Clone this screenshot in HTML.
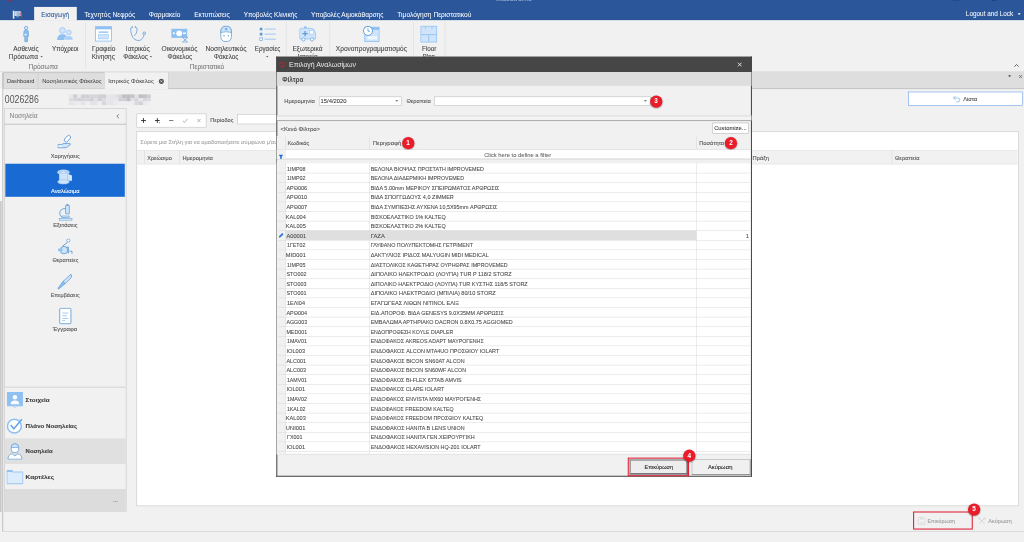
<!DOCTYPE html>
<html lang="el">
<head>
<meta charset="utf-8">
<title>Επιλογή Αναλωσίμων</title>
<style>
html,body{margin:0;padding:0;width:1024px;height:542px;overflow:hidden;background:#f1f1f1;}
body{font-family:"Liberation Sans",sans-serif;}
#app{position:absolute;left:0;top:0;width:1920px;height:1017px;transform:scale(0.5333333);transform-origin:0 0;overflow:hidden;background:#f1f1f1;}
#app div,#app svg.i{position:absolute;box-sizing:border-box;}
.t{position:absolute;white-space:nowrap;display:block;-webkit-text-stroke:0.16px currentColor;}
.s{display:inline-block;}
.badge{width:23px;height:23px;border-radius:50%;background:#ea1c2a;color:#fff;font-weight:bold;font-size:12px;line-height:23px;text-align:center;box-shadow:0 1px 3px rgba(0,0,0,.45);}

.blue{background:#2b579a;}
.vsep{background:#dadada;width:1px;}

</style>
</head>
<body>
<div id="app">
<!-- title / ribbon tabs -->
<div style="left:0px;top:0px;width:1920px;height:37.88px;background:#2b579a;border-bottom:1px solid #254d8c;"></div>
<div style="left:63.75px;top:13.12px;width:80.62px;height:25.5px;background:#f1f1f1;"></div>
<span class="t" style="left:-196.5px;top:19.94px;width:600px;text-align:center;font-size:12px;line-height:16px;color:#2b579a;"><span class="s" style="transform:scaleX(0.982);transform-origin:50% 50%;">Εισαγωγή</span></span>
<span class="t" style="left:157.5px;top:19.94px;font-size:12px;line-height:16px;color:#ffffff;-webkit-text-stroke:0.05px #fff;"><span class="s" style="transform:scaleX(1.040);transform-origin:0 50%;">Τεχνητός Νεφρός</span></span>
<span class="t" style="left:279.38px;top:19.94px;font-size:12px;line-height:16px;color:#ffffff;-webkit-text-stroke:0.05px #fff;"><span class="s" style="transform:scaleX(1.020);transform-origin:0 50%;">Φαρμακείο</span></span>
<span class="t" style="left:363.75px;top:19.94px;font-size:12px;line-height:16px;color:#ffffff;-webkit-text-stroke:0.05px #fff;"><span class="s" style="transform:scaleX(1.040);transform-origin:0 50%;">Εκτυπώσεις</span></span>
<span class="t" style="left:456.56px;top:19.94px;font-size:12px;line-height:16px;color:#ffffff;-webkit-text-stroke:0.05px #fff;"><span class="s" style="transform:scaleX(0.999);transform-origin:0 50%;">Υποβολές Κλινικής</span></span>
<span class="t" style="left:583.12px;top:19.94px;font-size:12px;line-height:16px;color:#ffffff;-webkit-text-stroke:0.05px #fff;"><span class="s" style="transform:scaleX(1.020);transform-origin:0 50%;">Υποβολές Αιμοκάθαρσης</span></span>
<span class="t" style="left:745.31px;top:19.94px;font-size:12px;line-height:16px;color:#ffffff;-webkit-text-stroke:0.05px #fff;"><span class="s" style="transform:scaleX(1.032);transform-origin:0 50%;">Τιμολόγηση Περιστατικού</span></span>
<span class="t" style="left:1810.69px;top:17.88px;font-size:12px;line-height:16px;color:#ffffff;-webkit-text-stroke:0.05px #fff;"><span class="s" style="transform:scaleX(0.999);transform-origin:0 50%;">Logout and Lock</span></span>
<div style="left:1908px;top:24.75px;width:5.62px;height:2.81px;width:0;height:0;border-left:3px solid transparent;border-right:3px solid transparent;border-top:3px solid #fff;"></div>
<svg class="i" style="left:21.88px;top:16.62px;" width="20" height="20" viewBox="0 0 20 20"><rect x="2" y="3" width="3" height="15" fill="#e8eef7"/><rect x="5" y="4" width="12" height="9" fill="#c9d6ea"/><rect x="9" y="6" width="9" height="10" fill="#9fb6d8"/><rect x="13" y="13" width="5" height="4" fill="#555"/><rect x="15" y="8" width="3" height="3" fill="#e06060"/><rect x="9" y="14" width="4" height="3" fill="#1f6fe0"/></svg>
<div style="left:1785.94px;top:0px;width:13.12px;height:1.12px;background:#1f4278;"></div>
<div style="left:1860px;top:0px;width:7.5px;height:1.69px;background:#1f4278;"></div>
<div style="left:15px;top:0px;width:7.5px;height:3px;background:#8a3050;border-radius:0 0 4px 4px;"></div>
<span class="t" style="left:930px;top:-10.62px;font-size:12px;line-height:16px;color:#9fb3d4;"><span class="s" style="transform:scaleX(1.124);transform-origin:0 50%;">Maestrome</span></span>
<!-- ribbon -->
<div style="left:0px;top:37.5px;width:1920px;height:96.56px;background:#f1f1f1;"></div>
<div style="left:159.84px;top:41.25px;width:1.03px;height:87.19px;background:#dcdcdc;"></div>
<div style="left:536.34px;top:41.25px;width:1.03px;height:87.19px;background:#dcdcdc;"></div>
<div style="left:617.72px;top:41.25px;width:1.03px;height:87.19px;background:#dcdcdc;"></div>
<div style="left:775.03px;top:41.25px;width:1.03px;height:87.19px;background:#dcdcdc;"></div>
<div style="left:833.91px;top:41.25px;width:1.03px;height:87.19px;background:#dcdcdc;"></div>
<div style="left:0px;top:132.75px;width:1920px;height:0.94px;background:#e6e6e6;"></div>
<svg class="i" style="left:32.56px;top:47.94px;" width="32" height="32" viewBox="0 0 32 32"><circle cx="16" cy="4.5" r="3.2" fill="#cfe4fa" stroke="#5b9bd5" stroke-width="1.2"/><path d="M12 10 Q16 7.5 20 10 L20.5 20 L18.5 20 L18.5 30 L13.5 30 L13.5 20 L11.5 20 Z" fill="#8fc0f2" stroke="#5b9bd5" stroke-width="1.2"/><path d="M12 17 L17 17" stroke="#fff" stroke-width="1.6"/></svg>
<span class="t" style="left:-251.44px;top:83.12px;width:600px;text-align:center;font-size:12px;line-height:16px;color:#444444;"><span class="s" style="transform:scaleX(1.000);transform-origin:50% 50%;">Ασθενείς</span></span>
<span class="t" style="left:-255.94px;top:98.5px;width:600px;text-align:center;font-size:12px;line-height:16px;color:#444444;"><span class="s" style="transform:scaleX(1.017);transform-origin:50% 50%;">Πρόσωπα</span></span>
<div style="left:75.56px;top:104.62px;width:5.62px;height:2.63px;width:0;height:0;border-left:2.5px solid transparent;border-right:2.5px solid transparent;border-top:3px solid #555;"></div>
<svg class="i" style="left:105.88px;top:47.94px;" width="32" height="32" viewBox="0 0 32 32"><circle cx="11" cy="9" r="5.5" fill="#cfe4fa" stroke="#8fc0f2" stroke-width="1.2"/><path d="M1 27 Q1 16 11 16 Q21 16 21 27 Z" fill="#8fc0f2"/><circle cx="23" cy="13" r="4.5" fill="#cfe4fa" stroke="#8fc0f2" stroke-width="1.2"/><path d="M15 27 Q15 19 23 19 Q31 19 31 27 Z" fill="#a9cff5" stroke="#fff" stroke-width="0.8"/></svg>
<span class="t" style="left:-178.12px;top:83.12px;width:600px;text-align:center;font-size:12px;line-height:16px;color:#444444;"><span class="s" style="transform:scaleX(0.985);transform-origin:50% 50%;">Υπόχρεοι</span></span>
<svg class="i" style="left:178.06px;top:47.94px;" width="32" height="32" viewBox="0 0 32 32"><rect x="1" y="2" width="30" height="27" fill="#fff" stroke="#8fc0f2" stroke-width="1.6"/><rect x="1" y="2" width="30" height="5" fill="#8fc0f2"/><rect x="7" y="11" width="18" height="2.5" fill="#8fc0f2"/><rect x="7" y="17" width="18" height="8" fill="#cfe4fa" stroke="#8fc0f2" stroke-width="1"/></svg>
<span class="t" style="left:-105.94px;top:83.12px;width:600px;text-align:center;font-size:12px;line-height:16px;color:#444444;"><span class="s" style="transform:scaleX(1.028);transform-origin:50% 50%;">Γραφείο</span></span>
<span class="t" style="left:-105.94px;top:98.5px;width:600px;text-align:center;font-size:12px;line-height:16px;color:#444444;"><span class="s" style="transform:scaleX(0.998);transform-origin:50% 50%;">Κίνησης</span></span>
<svg class="i" style="left:242.75px;top:47.94px;" width="32" height="32" viewBox="0 0 32 32"><path d="M5 3 Q1 3 2 9 Q4 24 12 27 Q20 30 24 24 Q27 20 27 17" fill="none" stroke="#5b9bd5" stroke-width="1.4"/><path d="M11 3 Q15 3 14 9 Q13 16 9 19" fill="none" stroke="#5b9bd5" stroke-width="1.4"/><circle cx="27.5" cy="14.5" r="2.6" fill="#cfe4fa" stroke="#5b9bd5" stroke-width="1.3"/><circle cx="5" cy="2.5" r="1.3" fill="#5b9bd5"/><circle cx="11" cy="2.5" r="1.3" fill="#5b9bd5"/></svg>
<span class="t" style="left:-41.25px;top:83.12px;width:600px;text-align:center;font-size:12px;line-height:16px;color:#444444;"><span class="s" style="transform:scaleX(1.051);transform-origin:50% 50%;">Ιατρικός</span></span>
<span class="t" style="left:-45.75px;top:98.5px;width:600px;text-align:center;font-size:12px;line-height:16px;color:#444444;"><span class="s" style="transform:scaleX(0.996);transform-origin:50% 50%;">Φάκελος</span></span>
<div style="left:281.34px;top:104.62px;width:5.62px;height:2.63px;width:0;height:0;border-left:2.5px solid transparent;border-right:2.5px solid transparent;border-top:3px solid #555;"></div>
<svg class="i" style="left:320.75px;top:47.94px;" width="32" height="32" viewBox="0 0 32 32"><rect x="0" y="6" width="30" height="17" fill="#8fc0f2"/><circle cx="15" cy="14.5" r="5.5" fill="#fff"/><circle cx="5" cy="14.5" r="2" fill="#fff"/><rect x="22" y="13" width="6" height="2.5" fill="#fff"/><path d="M21 22 L31 22 L26 27 L31 31 L21 31 L26 27 Z" fill="#cfe4fa" stroke="#5b9bd5" stroke-width="1.1"/></svg>
<span class="t" style="left:36.75px;top:83.12px;width:600px;text-align:center;font-size:12px;line-height:16px;color:#444444;"><span class="s" style="transform:scaleX(1.037);transform-origin:50% 50%;">Οικονομικός</span></span>
<span class="t" style="left:36.75px;top:98.5px;width:600px;text-align:center;font-size:12px;line-height:16px;color:#444444;"><span class="s" style="transform:scaleX(0.996);transform-origin:50% 50%;">Φάκελος</span></span>
<svg class="i" style="left:407.75px;top:47.94px;" width="32" height="32" viewBox="0 0 32 32"><path d="M6 12 Q6 1 16 1 Q26 1 26 12 L26 20 Q26 30 16 30 Q6 30 6 20 Z" fill="#fff" stroke="#5b9bd5" stroke-width="1.4"/><path d="M6 13 Q6 1 16 1 Q26 1 26 13 Q16 10 6 13 Z" fill="#cfe4fa" stroke="#5b9bd5" stroke-width="1.2"/><path d="M16 4 V9 M13.5 6.5 H18.5" stroke="#5b9bd5" stroke-width="1.6"/><circle cx="12" cy="19" r="1.3" fill="#5b9bd5"/><circle cx="20" cy="19" r="1.3" fill="#5b9bd5"/></svg>
<span class="t" style="left:123.75px;top:83.12px;width:600px;text-align:center;font-size:12px;line-height:16px;color:#444444;"><span class="s" style="transform:scaleX(1.052);transform-origin:50% 50%;">Νοσηλευτικός</span></span>
<span class="t" style="left:123.75px;top:98.5px;width:600px;text-align:center;font-size:12px;line-height:16px;color:#444444;"><span class="s" style="transform:scaleX(0.996);transform-origin:50% 50%;">Φάκελος</span></span>
<svg class="i" style="left:485.56px;top:47.94px;" width="32" height="32" viewBox="0 0 32 32"><rect x="1" y="4" width="5" height="5" fill="#5b9bd5"/><rect x="1" y="13.5" width="5" height="5" fill="#5b9bd5"/><rect x="1" y="23" width="5" height="5" fill="#fff" stroke="#5b9bd5" stroke-width="1.2"/><path d="M10 6.5 H31 M10 16 H31 M10 25.5 H31" stroke="#8fc0f2" stroke-width="1.6"/></svg>
<span class="t" style="left:201.56px;top:83.12px;width:600px;text-align:center;font-size:12px;line-height:16px;color:#444444;"><span class="s" style="transform:scaleX(0.976);transform-origin:50% 50%;">Εργασίες</span></span>
<div style="left:499.12px;top:104.62px;width:5.06px;height:2.63px;width:0;height:0;border-left:2.5px solid transparent;border-right:2.5px solid transparent;border-top:3px solid #555;"></div>
<svg class="i" style="left:560.75px;top:47.94px;" width="32" height="32" viewBox="0 0 32 32"><path d="M1 8 Q1 5 4 5 L22 5 Q28 5 30 12 L31 18 L31 25 L1 25 Z" fill="#cfe4fa" stroke="#8fc0f2" stroke-width="1.4"/><rect x="9" y="1.5" width="5" height="3" fill="#8fc0f2"/><path d="M11 10 V20 M6 15 H16" stroke="#5b9bd5" stroke-width="2.4"/><rect x="20" y="9" width="7" height="7" fill="#fff" stroke="#8fc0f2" stroke-width="1"/><circle cx="8" cy="26" r="3" fill="#fff" stroke="#5b9bd5" stroke-width="1.3"/><circle cx="24" cy="26" r="3" fill="#fff" stroke="#5b9bd5" stroke-width="1.3"/></svg>
<span class="t" style="left:276.75px;top:83.12px;width:600px;text-align:center;font-size:12px;line-height:16px;color:#444444;"><span class="s" style="transform:scaleX(1.024);transform-origin:50% 50%;">Εξωτερικά</span></span>
<span class="t" style="left:276.75px;top:98.5px;width:600px;text-align:center;font-size:12px;line-height:16px;color:#444444;"><span class="s" style="transform:scaleX(1.019);transform-origin:50% 50%;">Ιατρεία</span></span>
<svg class="i" style="left:680.19px;top:47.94px;" width="32" height="32" viewBox="0 0 32 32"><rect x="4" y="3" width="27" height="27" fill="#cfe4fa" stroke="#8fc0f2" stroke-width="1.6"/><rect x="4" y="3" width="27" height="5" fill="#8fc0f2"/><rect x="9" y="20" width="18" height="6" fill="#fff" opacity=".7"/><circle cx="10" cy="10" r="8.5" fill="#fff" stroke="#5b9bd5" stroke-width="1.8"/><path d="M10 5 V10.5 H14" fill="none" stroke="#5b9bd5" stroke-width="1.6"/></svg>
<span class="t" style="left:396.19px;top:83.12px;width:600px;text-align:center;font-size:12px;line-height:16px;color:#444444;"><span class="s" style="transform:scaleX(1.020);transform-origin:50% 50%;">Χρονοπρογραμματισμός</span></span>
<svg class="i" style="left:788.38px;top:47.94px;" width="32" height="32" viewBox="0 0 32 32"><rect x="1" y="1" width="30" height="30" fill="#cfe4fa" stroke="#8fc0f2" stroke-width="1.6"/><path d="M1 17 H31 M16 17 V31 M10 1 V6 M22 1 V6" stroke="#8fc0f2" stroke-width="1.6" fill="none"/></svg>
<span class="t" style="left:504.38px;top:83.12px;width:600px;text-align:center;font-size:12px;line-height:16px;color:#444444;"><span class="s" style="transform:scaleX(0.994);transform-origin:50% 50%;">Floor</span></span>
<span class="t" style="left:504.38px;top:98.5px;width:600px;text-align:center;font-size:12px;line-height:16px;color:#444444;"><span class="s" style="transform:scaleX(0.975);transform-origin:50% 50%;">Plan</span></span>
<span class="t" style="left:-219.38px;top:117.06px;width:600px;text-align:center;font-size:12px;line-height:16px;color:#7a7a7a;"><span class="s" style="transform:scaleX(1.028);transform-origin:50% 50%;">Πρόσωπα</span></span>
<span class="t" style="left:88.12px;top:117.06px;width:600px;text-align:center;font-size:12px;line-height:16px;color:#7a7a7a;"><span class="s" style="transform:scaleX(1.037);transform-origin:50% 50%;">Περιστατικό</span></span>
<svg class="i" style="left:1899.94px;top:117px;" width="12" height="12" viewBox="0 0 12 12"><path d="M2 8 L6 4 L10 8" fill="none" stroke="#555" stroke-width="1.7"/></svg>
<!-- document tabs -->
<div style="left:0px;top:133.5px;width:1920px;height:32.06px;background:#dedede;"></div>
<div style="left:0px;top:165.19px;width:1920px;height:1.5px;background:#c6c6c6;"></div>
<div style="left:0px;top:135px;width:6px;height:860.62px;background:#f1f1f1;"></div>
<div style="left:4.31px;top:135.56px;width:1.5px;height:861px;background:#c4c4c4;"></div>
<div style="left:0px;top:166.12px;width:4.31px;height:210.75px;background:#fafafa;"></div>
<div style="left:0px;top:376.88px;width:2.81px;height:583.12px;background:#c9c9c9;"></div>
<div style="left:6.38px;top:135.94px;width:65.81px;height:30.19px;background:#dedede;border:1px solid #b4b4b4;border-bottom:none;"></div>
<div style="left:72.19px;top:135.94px;width:123.75px;height:30.19px;background:#dedede;border:1px solid #b4b4b4;border-left:none;border-bottom:none;"></div>
<div style="left:195.94px;top:135.56px;width:120px;height:31.69px;background:#f1f1f1;border-right:1px solid #c4c4c4;"></div>
<span class="t" style="left:12.75px;top:145.25px;font-size:11px;line-height:14px;color:#444;-webkit-text-stroke:0.05px #444;"><span class="s" style="transform:scaleX(0.958);transform-origin:0 50%;">Dashboard</span></span>
<span class="t" style="left:78.75px;top:145.25px;font-size:11px;line-height:14px;color:#444;-webkit-text-stroke:0.05px #444;"><span class="s" style="transform:scaleX(0.993);transform-origin:0 50%;">Νοσηλευτικός Φάκελος</span></span>
<span class="t" style="left:203.44px;top:145.25px;font-size:11px;line-height:14px;color:#444;-webkit-text-stroke:0.05px #444;"><span class="s" style="transform:scaleX(1.008);transform-origin:0 50%;">Ιατρικός Φάκελος</span></span>
<svg class="i" style="left:297.31px;top:146.56px;" width="11" height="11" viewBox="0 0 12 12"><circle cx="6" cy="6" r="5.2" fill="#555"/><path d="M4 4 L8 8 M8 4 L4 8" stroke="#eee" stroke-width="1.4"/></svg>
<div style="left:1890.19px;top:141px;width:7.31px;height:3.94px;width:0;height:0;border-left:3.5px solid transparent;border-right:3.5px solid transparent;border-top:4.5px solid #555;"></div>
<svg class="i" style="left:1908.94px;top:138.56px;" width="9" height="9" viewBox="0 0 10 10"><path d="M2 2 L8 8 M8 2 L2 8" stroke="#555" stroke-width="1.5"/></svg>
<!-- patient header -->
<span class="t" style="left:8.62px;top:173.19px;font-size:20px;line-height:26px;color:#555;-webkit-text-stroke:0;"><span class="s" style="transform:scaleX(0.819);transform-origin:0 50%;">0026286</span></span>
<div style="left:0;top:0;width:0;height:0;filter:blur(1.2px);"><div style="left:129.38px;top:176.81px;width:7.87px;height:6.94px;background:#e8e8ec;"></div><div style="left:129.38px;top:183.56px;width:7.87px;height:6.94px;background:#dcdce0;"></div><div style="left:129.38px;top:190.31px;width:7.87px;height:6.94px;background:#e4e4e8;"></div><div style="left:137.06px;top:176.81px;width:7.88px;height:6.94px;background:#cfcfd3;"></div><div style="left:137.06px;top:183.56px;width:7.88px;height:6.94px;background:#d6d6da;"></div><div style="left:137.06px;top:190.31px;width:7.88px;height:6.94px;background:#eaeaee;"></div><div style="left:144.75px;top:176.81px;width:7.87px;height:6.94px;background:#e8e8ec;"></div><div style="left:144.75px;top:183.56px;width:7.87px;height:6.94px;background:#cfcfd3;"></div><div style="left:144.75px;top:190.31px;width:7.87px;height:6.94px;background:#eeeef2;"></div><div style="left:152.44px;top:176.81px;width:7.88px;height:6.94px;background:#cfcfd3;"></div><div style="left:152.44px;top:183.56px;width:7.88px;height:6.94px;background:#d6d6da;"></div><div style="left:152.44px;top:190.31px;width:7.88px;height:6.94px;background:#e4e4e8;"></div><div style="left:160.12px;top:176.81px;width:7.87px;height:6.94px;background:#d0d0d4;"></div><div style="left:160.12px;top:183.56px;width:7.87px;height:6.94px;background:#d6d6da;"></div><div style="left:160.12px;top:190.31px;width:7.87px;height:6.94px;background:#eeeef2;"></div><div style="left:167.81px;top:176.81px;width:7.87px;height:6.94px;background:#d6d6da;"></div><div style="left:167.81px;top:183.56px;width:7.87px;height:6.94px;background:#d0d0d4;"></div><div style="left:167.81px;top:190.31px;width:7.87px;height:6.94px;background:#e3e3e7;"></div><div style="left:175.5px;top:176.81px;width:7.87px;height:6.94px;background:#d6d6da;"></div><div style="left:175.5px;top:183.56px;width:7.87px;height:6.94px;background:#e2e2e6;"></div><div style="left:175.5px;top:190.31px;width:7.87px;height:6.94px;background:#e3e3e7;"></div><div style="left:183.19px;top:176.81px;width:7.88px;height:6.94px;background:#d0d0d4;"></div><div style="left:183.19px;top:183.56px;width:7.88px;height:6.94px;background:#cfcfd3;"></div><div style="left:183.19px;top:190.31px;width:7.88px;height:6.94px;background:#eeeef2;"></div><div style="left:190.88px;top:176.81px;width:7.88px;height:6.94px;background:#cfcfd3;"></div><div style="left:190.88px;top:183.56px;width:7.88px;height:6.94px;background:#dcdce0;"></div><div style="left:190.88px;top:190.31px;width:7.88px;height:6.94px;background:#d8d8dc;"></div><div style="left:198.56px;top:176.81px;width:7.87px;height:6.94px;background:#e6e6ea;"></div><div style="left:198.56px;top:183.56px;width:7.87px;height:6.94px;background:#e6e6ea;"></div><div style="left:198.56px;top:190.31px;width:7.87px;height:6.94px;background:#e6e6ea;"></div><div style="left:206.25px;top:176.81px;width:7.87px;height:6.94px;background:#e6e6ea;"></div><div style="left:206.25px;top:183.56px;width:7.87px;height:6.94px;background:#e6e6ea;"></div><div style="left:206.25px;top:190.31px;width:7.87px;height:6.94px;background:#e6e6ea;"></div><div style="left:213.94px;top:176.81px;width:7.87px;height:6.94px;background:#e2e2e6;"></div><div style="left:213.94px;top:183.56px;width:7.87px;height:6.94px;background:#e8e8ec;"></div><div style="left:213.94px;top:190.31px;width:7.87px;height:6.94px;background:#eaeaee;"></div><div style="left:221.62px;top:176.81px;width:7.88px;height:6.94px;background:#d6d6da;"></div><div style="left:221.62px;top:183.56px;width:7.88px;height:6.94px;background:#cfcfd3;"></div><div style="left:221.62px;top:190.31px;width:7.88px;height:6.94px;background:#eeeef2;"></div><div style="left:229.31px;top:176.81px;width:7.87px;height:6.94px;background:#bebec2;"></div><div style="left:229.31px;top:183.56px;width:7.87px;height:6.94px;background:#d0d0d4;"></div><div style="left:229.31px;top:190.31px;width:7.87px;height:6.94px;background:#eeeef2;"></div><div style="left:237px;top:176.81px;width:7.88px;height:6.94px;background:#bebec2;"></div><div style="left:237px;top:183.56px;width:7.88px;height:6.94px;background:#bebec2;"></div><div style="left:237px;top:190.31px;width:7.88px;height:6.94px;background:#eeeef2;"></div><div style="left:244.69px;top:176.81px;width:7.87px;height:6.94px;background:#c4c4c8;"></div><div style="left:244.69px;top:183.56px;width:7.87px;height:6.94px;background:#e2e2e6;"></div><div style="left:244.69px;top:190.31px;width:7.87px;height:6.94px;background:#eeeef2;"></div><div style="left:252.38px;top:176.81px;width:7.87px;height:6.94px;background:#e2e2e6;"></div><div style="left:252.38px;top:183.56px;width:7.87px;height:6.94px;background:#d6d6da;"></div><div style="left:252.38px;top:190.31px;width:7.87px;height:6.94px;background:#d8d8dc;"></div><div style="left:260.06px;top:176.81px;width:7.88px;height:6.94px;background:#bebec2;"></div><div style="left:260.06px;top:183.56px;width:7.88px;height:6.94px;background:#e8e8ec;"></div><div style="left:260.06px;top:190.31px;width:7.88px;height:6.94px;background:#d2d2d6;"></div><div style="left:267.75px;top:176.81px;width:7.87px;height:6.94px;background:#c4c4c8;"></div><div style="left:267.75px;top:183.56px;width:7.87px;height:6.94px;background:#d6d6da;"></div><div style="left:267.75px;top:190.31px;width:7.87px;height:6.94px;background:#eaeaee;"></div><div style="left:275.44px;top:176.81px;width:7.88px;height:6.94px;background:#d0d0d4;"></div><div style="left:275.44px;top:183.56px;width:7.88px;height:6.94px;background:#dcdce0;"></div><div style="left:275.44px;top:190.31px;width:7.88px;height:6.94px;background:#eeeef2;"></div></div>
<div style="left:1702.88px;top:172.12px;width:215.25px;height:26.25px;background:#fff;border:1.9px solid #5f95e3;"></div>
<svg class="i" style="left:1786.38px;top:176.88px;" width="16" height="16" viewBox="0 0 17 17"><path d="M6 3 L2 7 L6 11" fill="none" stroke="#8fc0f2" stroke-width="1.8"/><path d="M2 7 H10.5 Q14.5 7 14.5 11 Q14.5 15 10 15 H7" fill="none" stroke="#8fc0f2" stroke-width="1.8"/></svg>
<span class="t" style="left:1806.19px;top:177.88px;font-size:11px;line-height:14px;color:#444;"><span class="s" style="transform:scaleX(0.967);transform-origin:0 50%;">Λίστα</span></span>
<!-- navigation panel -->
<div style="left:7.69px;top:202.88px;width:229.12px;height:756px;background:#f1f1f1;border:1px solid #c2c2c2;"></div>
<div style="left:7.69px;top:232.31px;width:229.12px;height:1.5px;background:#c6c6c6;"></div>
<span class="t" style="left:18.19px;top:210.25px;font-size:12px;line-height:16px;color:#8a8a8a;"><span class="s" style="transform:scaleX(1.042);transform-origin:0 50%;">Νοσηλεία</span></span>
<svg class="i" style="left:215.88px;top:213.25px;" width="10" height="10" viewBox="0 0 10 10"><path d="M7 1.5 L3 5 L7 8.5" fill="none" stroke="#555" stroke-width="1.3"/></svg>
<div style="left:9.75px;top:307.12px;width:224.62px;height:62.06px;background:#1a6ad4;"></div>
<svg class="i" style="left:105.88px;top:251.75px;" width="32" height="32" viewBox="0 0 32 32"><rect x="17" y="1" width="7" height="14" rx="3.5" transform="rotate(40 20.5 8)" fill="#fff" stroke="#5b9bd5" stroke-width="1.6"/><path d="M3 19 H9 L14 17 H24 Q28 17 25 20 L18 25 H9 L3 25 Z" fill="#cfe4fa" stroke="#5b9bd5" stroke-width="1.5"/><path d="M3 22 H10" stroke="#fff" stroke-width="2.5"/></svg>
<span class="t" style="left:-177.75px;top:285.12px;width:600px;text-align:center;font-size:11px;line-height:14px;color:#505050;"><span class="s" style="transform:scaleX(0.956);transform-origin:50% 50%;">Χορηγήσεις</span></span>
<svg class="i" style="left:105.88px;top:316.76px;" width="32" height="32" viewBox="0 0 32 32"><ellipse cx="13" cy="6" rx="11" ry="4.2" fill="#a9cff5" stroke="#d8e9fb" stroke-width="1.6"/><ellipse cx="13" cy="6" rx="4" ry="1.5" fill="#d8e9fb"/><rect x="5" y="9" width="16" height="13" fill="#cfe4fa"/><path d="M21 9 L29 12 L29 22 L21 22 Z" fill="#cfe4fa"/><ellipse cx="13" cy="24" rx="11" ry="4" fill="#cfe4fa" stroke="#8fc0f2" stroke-width="1.2"/></svg>
<span class="t" style="left:-177.75px;top:350.13px;width:600px;text-align:center;font-size:11px;line-height:14px;color:#fff;"><span class="s" style="transform:scaleX(0.974);transform-origin:50% 50%;">Αναλώσιμα</span></span>
<svg class="i" style="left:105.88px;top:381.76px;" width="32" height="32" viewBox="0 0 32 32"><rect x="17" y="3" width="7" height="16" rx="1" fill="#cfe4fa" stroke="#5b9bd5" stroke-width="1.5"/><rect x="19" y="0.5" width="3" height="3" fill="#5b9bd5"/><path d="M17 9 Q6 9 6 18 Q6 24 12 26" fill="none" stroke="#5b9bd5" stroke-width="1.6"/><rect x="10" y="23" width="14" height="3" fill="#cfe4fa" stroke="#5b9bd5" stroke-width="1"/><rect x="5" y="28" width="24" height="3" fill="#cfe4fa" stroke="#5b9bd5" stroke-width="1"/></svg>
<span class="t" style="left:-177.75px;top:415.14px;width:600px;text-align:center;font-size:11px;line-height:14px;color:#505050;"><span class="s" style="transform:scaleX(0.974);transform-origin:50% 50%;">Εξετάσεις</span></span>
<svg class="i" style="left:105.88px;top:446.77px;" width="32" height="32" viewBox="0 0 32 32"><circle cx="22" cy="4" r="3" fill="#fff" stroke="#5b9bd5" stroke-width="1.4"/><path d="M20 8 L12 14 L16 18 L22 16 L22 28" fill="none" stroke="#5b9bd5" stroke-width="1.8"/><circle cx="14" cy="22" r="7" fill="#cfe4fa" stroke="#5b9bd5" stroke-width="1.6"/><rect x="3" y="19" width="8" height="5" fill="#8fc0f2"/><path d="M24 24 H29 V29" fill="none" stroke="#5b9bd5" stroke-width="1.6"/></svg>
<span class="t" style="left:-177.75px;top:480.14px;width:600px;text-align:center;font-size:11px;line-height:14px;color:#505050;"><span class="s" style="transform:scaleX(0.952);transform-origin:50% 50%;">Θεραπείες</span></span>
<svg class="i" style="left:105.88px;top:511.78px;" width="32" height="32" viewBox="0 0 32 32"><path d="M27 2 Q30 5 27 9 L16 20 L12 16 Z" fill="#cfe4fa" stroke="#5b9bd5" stroke-width="1.5"/><path d="M12 16 L16 20 L4 30 Q2 30 3 28 Z" fill="#8fc0f2" stroke="#5b9bd5" stroke-width="1.3"/></svg>
<span class="t" style="left:-177.75px;top:545.15px;width:600px;text-align:center;font-size:11px;line-height:14px;color:#505050;"><span class="s" style="transform:scaleX(0.933);transform-origin:50% 50%;">Επεμβάσεις</span></span>
<svg class="i" style="left:105.88px;top:576.78px;" width="32" height="32" viewBox="0 0 32 32"><rect x="6" y="1" width="21" height="29" rx="1.5" fill="#fff" stroke="#5b9bd5" stroke-width="1.6"/><path d="M11 10 H22 M11 15 H19 M11 20 H22 M11 24 H16" stroke="#8fc0f2" stroke-width="1.6"/></svg>
<span class="t" style="left:-177.75px;top:610.16px;width:600px;text-align:center;font-size:11px;line-height:14px;color:#505050;"><span class="s" style="transform:scaleX(1.004);transform-origin:50% 50%;">Έγγραφα</span></span>
<div style="left:8.62px;top:724.88px;width:227.44px;height:1.69px;background:#d6d6d6;"></div>
<div style="left:8.62px;top:822.38px;width:227.44px;height:47.44px;background:#e0e0e0;"></div>
<div style="left:8.62px;top:918px;width:227.44px;height:40.12px;background:#dcdcdc;border-top:1px solid #cfcfcf;"></div>
<span class="t" style="left:211.88px;top:931.44px;font-size:11px;line-height:14px;color:#666;"><span class="s" style="">...</span></span>
<svg class="i" style="left:12.12px;top:733.44px;" width="32" height="32" viewBox="0 0 32 32"><rect x="1" y="2" width="30" height="26" fill="#8fc0f2"/><circle cx="16" cy="12" r="4.2" fill="#fff"/><path d="M8 25 Q8 18 16 18 Q24 18 24 25 Z" fill="#fff"/><path d="M1 28 H12 L16 31 L20 28 H31" fill="none" stroke="#8fc0f2" stroke-width="1.5"/></svg>
<span class="t" style="left:48.19px;top:742.62px;font-size:11px;line-height:14px;color:#3a3a3a;font-weight:bold;"><span class="s" style="transform:scaleX(1.067);transform-origin:0 50%;">Στοιχεία</span></span>
<svg class="i" style="left:12.12px;top:781.62px;" width="32" height="32" viewBox="0 0 32 32"><circle cx="15" cy="17" r="13" fill="#fff" stroke="#8fc0f2" stroke-width="3"/><path d="M8 15 L14 22 L29 4" fill="none" stroke="#6aa6ea" stroke-width="3"/></svg>
<span class="t" style="left:48.19px;top:790.81px;font-size:11px;line-height:14px;color:#3a3a3a;font-weight:bold;"><span class="s" style="transform:scaleX(1.045);transform-origin:0 50%;">Πλάνο Νοσηλείας</span></span>
<svg class="i" style="left:12.12px;top:829.81px;" width="32" height="32" viewBox="0 0 32 32"><path d="M9 9 Q9 2 16 2 Q23 2 23 9 L23 13 Q23 19 16 19 Q9 19 9 13 Z" fill="#fff" stroke="#5b9bd5" stroke-width="1.4"/><path d="M9 9 Q9 2 16 2 Q23 2 23 9 Z" fill="#cfe4fa" stroke="#5b9bd5" stroke-width="1.2"/><path d="M3 31 Q3 22 11 21 L16 25 L21 21 Q29 22 29 31 Z" fill="#fff" stroke="#5b9bd5" stroke-width="1.4"/></svg>
<span class="t" style="left:48.19px;top:839px;font-size:11px;line-height:14px;color:#3a3a3a;font-weight:bold;"><span class="s" style="transform:scaleX(1.011);transform-origin:0 50%;">Νοσηλεία</span></span>
<svg class="i" style="left:12.12px;top:878.19px;" width="32" height="32" viewBox="0 0 32 32"><path d="M1 4 H11 V7 H31 V29 H1 Z" fill="#dcecfc" stroke="#8fc0f2" stroke-width="1.6"/><rect x="1" y="4" width="10" height="3" fill="#8fc0f2"/></svg>
<span class="t" style="left:48.19px;top:887.38px;font-size:11px;line-height:14px;color:#3a3a3a;font-weight:bold;"><span class="s" style="transform:scaleX(1.116);transform-origin:0 50%;">Καρτέλες</span></span>
<!-- main grid -->
<div style="left:255.56px;top:213px;width:131.81px;height:26.25px;background:#fff;border:1px solid #bcbcbc;"></div>
<svg class="i" style="left:262.69px;top:219.94px;" width="12" height="12" viewBox="0 0 12 12"><path d="M6 1.5 V10.5 M1.5 6 H10.5" stroke="#2a2a2a" stroke-width="1.7"/></svg>
<svg class="i" style="left:289.12px;top:219.94px;" width="12" height="12" viewBox="0 0 12 12"><path d="M6 1.5 V10.5 M1.5 6 H10.5" stroke="#2a2a2a" stroke-width="1.7"/><rect x="9.6" y="9.6" width="1.6" height="1.6" fill="#2a2a2a"/></svg>
<svg class="i" style="left:315px;top:219.94px;" width="12" height="12" viewBox="0 0 12 12"><path d="M2 6 H10" stroke="#555" stroke-width="1.5"/></svg>
<svg class="i" style="left:340.88px;top:219.94px;" width="12" height="12" viewBox="0 0 12 12"><path d="M2 6.5 L5 9.5 L10.5 3" fill="none" stroke="#a0a0a0" stroke-width="1.5"/></svg>
<svg class="i" style="left:366.94px;top:219.94px;" width="12" height="12" viewBox="0 0 12 12"><path d="M3 3 L9 9 M9 3 L3 9" stroke="#9a9a9a" stroke-width="1.4"/></svg>
<span class="t" style="left:393.56px;top:217.25px;font-size:11px;line-height:14px;color:#505050;"><span class="s" style="transform:scaleX(0.966);transform-origin:0 50%;">Περίοδος</span></span>
<div style="left:444.94px;top:213.94px;width:342.56px;height:19.31px;background:#fff;border:1px solid #bcbcbc;"></div>
<div style="left:255.56px;top:246.19px;width:1654.12px;height:702.94px;background:#fff;border:1px solid #bdbdbd;"></div>
<span class="t" style="left:263.25px;top:259.06px;font-size:11px;line-height:14px;color:#a2a2a2;"><span class="s" style="transform:scaleX(0.968);transform-origin:0 50%;">Σύρετε μια Στήλη για να ομαδοποιήσετε σύμφωνα μ'αυτήν</span></span>
<div style="left:256.5px;top:281.81px;width:1651.88px;height:26.06px;background:#f1f1f1;border-top:1px solid #dcdcdc;border-bottom:1px solid #dcdcdc;"></div>
<div style="left:270.47px;top:282.75px;width:1.03px;height:24.19px;background:#d8d8d8;"></div>
<div style="left:335.91px;top:282.75px;width:1.03px;height:24.19px;background:#d8d8d8;"></div>
<div style="left:1672.03px;top:282.75px;width:1.03px;height:24.19px;background:#d8d8d8;"></div>
<span class="t" style="left:276.19px;top:288.5px;font-size:11px;line-height:14px;color:#505050;"><span class="s" style="transform:scaleX(0.942);transform-origin:0 50%;">Χρεώσιμο</span></span>
<span class="t" style="left:341.81px;top:288.5px;font-size:11px;line-height:14px;color:#505050;"><span class="s" style="transform:scaleX(0.980);transform-origin:0 50%;">Ημερομηνία</span></span>
<span class="t" style="left:1411.12px;top:288.5px;font-size:11px;line-height:14px;color:#505050;"><span class="s" style="transform:scaleX(0.979);transform-origin:0 50%;">Πράξη</span></span>
<span class="t" style="left:1678.12px;top:288.5px;font-size:11px;line-height:14px;color:#505050;"><span class="s" style="transform:scaleX(0.970);transform-origin:0 50%;">Θεραπεία</span></span>
<!-- footer -->
<div style="left:6px;top:995.81px;width:1914px;height:1.69px;background:#c8c8c8;"></div>
<div style="left:1712.06px;top:958.69px;width:112.31px;height:34.31px;border:2.2px solid #de2236;"></div>
<svg class="i" style="left:1719.81px;top:968.88px;" width="16" height="16" viewBox="0 0 16 16"><path d="M2 1.5 H12 L14.5 4 V14.5 H2 Z" fill="#f4f4f4" stroke="#d4d4d4" stroke-width="1.3"/><rect x="5" y="1.5" width="6" height="4" fill="#e0e0e0"/><rect x="4.5" y="9" width="8" height="5.5" fill="#e6e6e6"/></svg>
<span class="t" style="left:1739.44px;top:970.25px;font-size:11px;line-height:14px;color:#9a9a9a;"><span class="s" style="transform:scaleX(0.910);transform-origin:0 50%;">Επικύρωση</span></span>
<svg class="i" style="left:1833.25px;top:968.88px;" width="16" height="16" viewBox="0 0 16 16"><path d="M3 3 L13 13 M13 3 L3 13" stroke="#d2d2d2" stroke-width="1.6"/><circle cx="3" cy="3" r="1.6" fill="none" stroke="#d2d2d2"/><circle cx="13" cy="3" r="1.6" fill="none" stroke="#d2d2d2"/></svg>
<span class="t" style="left:1852.88px;top:970.25px;font-size:11px;line-height:14px;color:#9a9a9a;"><span class="s" style="transform:scaleX(0.945);transform-origin:0 50%;">Ακύρωση</span></span>
<div class="badge" style="left:1814.75px;top:944.38px;">5</div>
<!-- modal: Επιλογή Αναλωσίμων -->
<div style="left:517.69px;top:106.31px;width:892.31px;height:787.69px;background:#f1f1f1;border:2px solid #4c4c4c;border-top:none;"></div>
<div style="left:517.69px;top:106.31px;width:892.31px;height:29.25px;background:#464646;"></div>
<svg class="i" style="left:521.31px;top:112.56px;" width="16" height="16" viewBox="0 0 16 16"><path d="M8 14 Q1 9 3 5 Q5 2.5 8 6 Q11 2.5 13 5 Q15 9 8 14 Z" fill="none" stroke="#b02a30" stroke-width="1.5"/><path d="M5 2 L6.5 5 L4 5 Z" fill="#d03030"/><circle cx="8.5" cy="11" r="1" fill="#d03030"/></svg>
<span class="t" style="left:541.5px;top:110.56px;font-size:15px;line-height:20px;color:#ececec;-webkit-text-stroke:0;"><span class="s" style="transform:scaleX(0.873);transform-origin:0 50%;">Επιλογή Αναλωσίμων</span></span>
<svg class="i" style="left:1382.31px;top:115.75px;" width="10" height="10" viewBox="0 0 10 10"><path d="M1.5 1.5 L8.5 8.5 M8.5 1.5 L1.5 8.5" stroke="#fff" stroke-width="1.5"/></svg>
<div style="left:518.62px;top:135.38px;width:890.44px;height:25.69px;background:#dedede;"></div>
<span class="t" style="left:528.75px;top:140.69px;font-size:12px;line-height:16px;color:#484848;font-weight:bold;-webkit-text-stroke:0;"><span class="s" style="transform:scaleX(0.998);transform-origin:0 50%;">Φίλτρα</span></span>
<span class="t" style="left:532.88px;top:182.38px;font-size:11px;line-height:14px;color:#505050;"><span class="s" style="transform:scaleX(0.980);transform-origin:0 50%;">Ημερομηνία</span></span>
<div style="left:598.12px;top:180.75px;width:155.25px;height:17.25px;background:#fff;border:1px solid #b6b6b6;"></div>
<span class="t" style="left:601.12px;top:182.38px;font-size:11px;line-height:14px;color:#3a3a3a;"><span class="s" style="transform:scaleX(0.996);transform-origin:0 50%;">15/4/2020</span></span>
<div style="left:740.62px;top:188.06px;width:6.37px;height:3px;width:0;height:0;border-left:3px solid transparent;border-right:3px solid transparent;border-top:3.5px solid #666;"></div>
<span class="t" style="left:761.62px;top:182.38px;font-size:11px;line-height:14px;color:#505050;"><span class="s" style="transform:scaleX(0.970);transform-origin:0 50%;">Θεραπεία</span></span>
<div style="left:813.75px;top:180.75px;width:406.5px;height:17.25px;background:#fff;border:1px solid #b6b6b6;"></div>
<div style="left:1206.94px;top:188.06px;width:6.19px;height:3px;width:0;height:0;border-left:3px solid transparent;border-right:3px solid transparent;border-top:3.5px solid #666;"></div>
<div class="badge" style="left:1218.5px;top:178.62px;">3</div>
<div style="left:518.62px;top:216px;width:890.44px;height:3.37px;background:#e2e2e2;"></div>
<div style="left:518.62px;top:219.38px;width:890.44px;height:5.25px;background:#f3f3f3;"></div>
<div style="left:518.62px;top:224.62px;width:890.44px;height:2.06px;background:#b0b0b0;"></div>
<span class="t" style="left:525.56px;top:234.12px;font-size:11px;line-height:14px;color:#505050;"><span class="s" style="transform:scaleX(1.012);transform-origin:0 50%;">&lt;Κενό Φίλτρο&gt;</span></span>
<div style="left:1335.56px;top:230.25px;width:68.63px;height:20.25px;background:#fff;border:1px solid #aaa;"></div>
<span class="t" style="left:1338.75px;top:233.37px;font-size:11px;line-height:14px;color:#3c3c3c;"><span class="s" style="transform:scaleX(0.997);transform-origin:0 50%;">Customize...</span></span>
<div style="left:519.38px;top:255.37px;width:887.62px;height:25.5px;background:#f1f1f1;border-bottom:1px solid #d4d4d4;"></div>
<div style="left:535.03px;top:256.12px;width:1.03px;height:24.38px;background:#dadada;"></div>
<div style="left:692.34px;top:256.12px;width:1.03px;height:24.38px;background:#dadada;"></div>
<div style="left:1305.28px;top:256.12px;width:1.03px;height:24.38px;background:#dadada;"></div>
<span class="t" style="left:539.44px;top:260.75px;font-size:11px;line-height:14px;color:#505050;"><span class="s" style="transform:scaleX(1.002);transform-origin:0 50%;">Κωδικός</span></span>
<span class="t" style="left:698.62px;top:260.75px;font-size:11px;line-height:14px;color:#505050;"><span class="s" style="transform:scaleX(1.010);transform-origin:0 50%;">Περιγραφή</span></span>
<span class="t" style="left:1310.62px;top:260.75px;font-size:11px;line-height:14px;color:#505050;"><span class="s" style="transform:scaleX(0.980);transform-origin:0 50%;">Ποσότητα</span></span>
<div class="badge" style="left:753.5px;top:256.81px;">1</div>
<div class="badge" style="left:1359.12px;top:257.19px;">2</div>
<div style="left:519.38px;top:281.25px;width:887.62px;height:17.06px;background:#fff;border-bottom:1px solid #d8d8d8;"></div>
<div style="left:519.38px;top:281.25px;width:16.13px;height:17.06px;background:#f1f1f1;"></div>
<svg class="i" style="left:522.31px;top:289.25px;" width="9.5" height="9.5" viewBox="0 0 8 8"><path d="M0.3 0.8 H7.7 L5.1 4 V7.6 H2.9 V4 Z" fill="#1a6ad4"/></svg>
<span class="t" style="left:670.31px;top:283.06px;width:600px;text-align:center;font-size:11px;line-height:14px;color:#6a6a6a;"><span class="s" style="transform:scaleX(0.988);transform-origin:50% 50%;">Click here to define a filter</span></span>
<div style="left:519.38px;top:298.69px;width:887.62px;height:8.25px;background:#f0f0f0;border-bottom:1px solid #d0d0d0;border-top:1px solid #d8d8d8;"></div>
<div style="left:519.38px;top:306.47px;width:887.62px;height:545.16px;background:#fff;border-bottom:1px solid #cfcfcf;"></div>
<div style="left:519.38px;top:306.47px;width:16.13px;height:545.16px;background:#f1f1f1;"></div>
<div style="left:535.5px;top:432.47px;width:770.25px;height:18px;background:#dfdfdf;"></div>
<div style="left:519.38px;top:323.91px;width:887.62px;height:1.03px;background:#dcdcdc;"></div>
<div style="left:519.38px;top:341.91px;width:887.62px;height:1.03px;background:#dcdcdc;"></div>
<div style="left:519.38px;top:359.91px;width:887.62px;height:1.03px;background:#dcdcdc;"></div>
<div style="left:519.38px;top:377.91px;width:887.62px;height:1.03px;background:#dcdcdc;"></div>
<div style="left:519.38px;top:395.91px;width:887.62px;height:1.03px;background:#dcdcdc;"></div>
<div style="left:519.38px;top:413.91px;width:887.62px;height:1.03px;background:#dcdcdc;"></div>
<div style="left:519.38px;top:431.91px;width:887.62px;height:1.03px;background:#dcdcdc;"></div>
<div style="left:519.38px;top:449.91px;width:887.62px;height:1.03px;background:#dcdcdc;"></div>
<div style="left:519.38px;top:467.91px;width:887.62px;height:1.03px;background:#dcdcdc;"></div>
<div style="left:519.38px;top:485.91px;width:887.62px;height:1.03px;background:#dcdcdc;"></div>
<div style="left:519.38px;top:503.91px;width:887.62px;height:1.03px;background:#dcdcdc;"></div>
<div style="left:519.38px;top:521.91px;width:887.62px;height:1.03px;background:#dcdcdc;"></div>
<div style="left:519.38px;top:539.91px;width:887.62px;height:1.03px;background:#dcdcdc;"></div>
<div style="left:519.38px;top:557.91px;width:887.62px;height:1.03px;background:#dcdcdc;"></div>
<div style="left:519.38px;top:575.91px;width:887.62px;height:1.03px;background:#dcdcdc;"></div>
<div style="left:519.38px;top:593.91px;width:887.62px;height:1.03px;background:#dcdcdc;"></div>
<div style="left:519.38px;top:611.91px;width:887.62px;height:1.03px;background:#dcdcdc;"></div>
<div style="left:519.38px;top:629.91px;width:887.62px;height:1.03px;background:#dcdcdc;"></div>
<div style="left:519.38px;top:647.91px;width:887.62px;height:1.03px;background:#dcdcdc;"></div>
<div style="left:519.38px;top:665.91px;width:887.62px;height:1.03px;background:#dcdcdc;"></div>
<div style="left:519.38px;top:683.91px;width:887.62px;height:1.03px;background:#dcdcdc;"></div>
<div style="left:519.38px;top:701.91px;width:887.62px;height:1.03px;background:#dcdcdc;"></div>
<div style="left:519.38px;top:719.91px;width:887.62px;height:1.03px;background:#dcdcdc;"></div>
<div style="left:519.38px;top:737.91px;width:887.62px;height:1.03px;background:#dcdcdc;"></div>
<div style="left:519.38px;top:755.91px;width:887.62px;height:1.03px;background:#dcdcdc;"></div>
<div style="left:519.38px;top:773.91px;width:887.62px;height:1.03px;background:#dcdcdc;"></div>
<div style="left:519.38px;top:791.91px;width:887.62px;height:1.03px;background:#dcdcdc;"></div>
<div style="left:519.38px;top:809.91px;width:887.62px;height:1.03px;background:#dcdcdc;"></div>
<div style="left:519.38px;top:827.91px;width:887.62px;height:1.03px;background:#dcdcdc;"></div>
<div style="left:519.38px;top:845.91px;width:887.62px;height:1.03px;background:#dcdcdc;"></div>
<div style="left:535.03px;top:306.47px;width:1.03px;height:544.78px;background:#dcdcdc;"></div>
<div style="left:692.34px;top:306.47px;width:1.03px;height:544.78px;background:#dcdcdc;"></div>
<div style="left:1305.28px;top:306.47px;width:1.03px;height:544.78px;background:#dcdcdc;"></div>
<span class="t" style="left:538.12px;top:309.12px;font-size:11px;line-height:14px;color:#4a4a4a;"><span class="s" style="transform:scaleX(0.915);transform-origin:0 50%;">1IMP08</span></span>
<span class="t" style="left:695.25px;top:309.12px;font-size:11px;line-height:14px;color:#4a4a4a;"><span class="s" style="transform:scaleX(0.914);transform-origin:0 50%;">ΒΕΛΟΝΑ ΒΙΟΨΙΑΣ ΠΡΟΣΤΑΤΗ IMPROVEMED</span></span>
<span class="t" style="left:538.12px;top:327.12px;font-size:11px;line-height:14px;color:#4a4a4a;"><span class="s" style="transform:scaleX(0.915);transform-origin:0 50%;">1IMP02</span></span>
<span class="t" style="left:695.25px;top:327.12px;font-size:11px;line-height:14px;color:#4a4a4a;"><span class="s" style="transform:scaleX(0.907);transform-origin:0 50%;">ΒΕΛΟΝΑ ΔΙΑΔΕΡΜΙΚΗ IMPROVEMED</span></span>
<span class="t" style="left:536.81px;top:345.12px;font-size:11px;line-height:14px;color:#4a4a4a;"><span class="s" style="transform:scaleX(0.933);transform-origin:0 50%;">ΑΡΘ006</span></span>
<span class="t" style="left:695.25px;top:345.12px;font-size:11px;line-height:14px;color:#4a4a4a;"><span class="s" style="transform:scaleX(0.933);transform-origin:0 50%;">ΒΙΔΑ 5.00mm ΜΕΡΙΚΟΥ ΣΠΕΙΡΩΜΑΤΟΣ ΑΡΘΡΩΣΙΣ</span></span>
<span class="t" style="left:536.81px;top:363.12px;font-size:11px;line-height:14px;color:#4a4a4a;"><span class="s" style="transform:scaleX(0.933);transform-origin:0 50%;">ΑΡΘ010</span></span>
<span class="t" style="left:695.25px;top:363.12px;font-size:11px;line-height:14px;color:#4a4a4a;"><span class="s" style="transform:scaleX(0.943);transform-origin:0 50%;">ΒΙΔΑ ΣΠΟΓΓΩΔΟΥΣ 4,0 ZIMMER</span></span>
<span class="t" style="left:536.81px;top:381.12px;font-size:11px;line-height:14px;color:#4a4a4a;"><span class="s" style="transform:scaleX(0.933);transform-origin:0 50%;">ΑΡΘ007</span></span>
<span class="t" style="left:695.25px;top:381.12px;font-size:11px;line-height:14px;color:#4a4a4a;"><span class="s" style="transform:scaleX(0.924);transform-origin:0 50%;">ΒΙΔΑ ΣΥΜΠΙΕΣΗΣ ΑΥΧΕΝΑ 10,5X95mm ΑΡΘΡΩΣΙΣ</span></span>
<span class="t" style="left:536.25px;top:399.12px;font-size:11px;line-height:14px;color:#4a4a4a;"><span class="s" style="transform:scaleX(0.958);transform-origin:0 50%;">KAL004</span></span>
<span class="t" style="left:695.25px;top:399.12px;font-size:11px;line-height:14px;color:#4a4a4a;"><span class="s" style="transform:scaleX(0.928);transform-origin:0 50%;">ΒΙΣΚΟΕΛΑΣΤΙΚΟ 1% KALTEQ</span></span>
<span class="t" style="left:536.25px;top:417.12px;font-size:11px;line-height:14px;color:#4a4a4a;"><span class="s" style="transform:scaleX(0.958);transform-origin:0 50%;">KAL005</span></span>
<span class="t" style="left:695.25px;top:417.12px;font-size:11px;line-height:14px;color:#4a4a4a;"><span class="s" style="transform:scaleX(0.928);transform-origin:0 50%;">ΒΙΣΚΟΕΛΑΣΤΙΚΟ 2% KALTEQ</span></span>
<span class="t" style="left:536.81px;top:435.12px;font-size:11px;line-height:14px;color:#4a4a4a;"><span class="s" style="transform:scaleX(0.974);transform-origin:0 50%;">A00001</span></span>
<span class="t" style="left:695.25px;top:435.12px;font-size:11px;line-height:14px;color:#4a4a4a;"><span class="s" style="transform:scaleX(1.006);transform-origin:0 50%;">ΓΑΖΑ</span></span>
<span class="t" style="left:538.12px;top:453.12px;font-size:11px;line-height:14px;color:#4a4a4a;"><span class="s" style="transform:scaleX(0.902);transform-origin:0 50%;">1ΓΕΤ02</span></span>
<span class="t" style="left:695.25px;top:453.12px;font-size:11px;line-height:14px;color:#4a4a4a;"><span class="s" style="transform:scaleX(0.913);transform-origin:0 50%;">ΓΛΥΦΑΝΟ ΠΟΛΥΠΕΚΤΟΜΗΣ ΓΕΤΡΙΜΕΝΤ</span></span>
<span class="t" style="left:536.25px;top:471.12px;font-size:11px;line-height:14px;color:#4a4a4a;"><span class="s" style="transform:scaleX(0.973);transform-origin:0 50%;">MID001</span></span>
<span class="t" style="left:695.25px;top:471.12px;font-size:11px;line-height:14px;color:#4a4a4a;"><span class="s" style="transform:scaleX(0.930);transform-origin:0 50%;">ΔΑΚΤΥΛΙΟΣ ΙΡΙΔΟΣ MALYUGIN MIDI MEDICAL</span></span>
<span class="t" style="left:538.12px;top:489.13px;font-size:11px;line-height:14px;color:#4a4a4a;"><span class="s" style="transform:scaleX(0.915);transform-origin:0 50%;">1IMP05</span></span>
<span class="t" style="left:695.25px;top:489.13px;font-size:11px;line-height:14px;color:#4a4a4a;"><span class="s" style="transform:scaleX(0.910);transform-origin:0 50%;">ΔΙΑΣΤΟΛΙΚΟΣ ΚΑΘΕΤΗΡΑΣ ΟΥΡΗΘΡΑΣ IMPROVEMED</span></span>
<span class="t" style="left:536.81px;top:507.12px;font-size:11px;line-height:14px;color:#4a4a4a;"><span class="s" style="transform:scaleX(0.929);transform-origin:0 50%;">STO002</span></span>
<span class="t" style="left:695.25px;top:507.12px;font-size:11px;line-height:14px;color:#4a4a4a;"><span class="s" style="transform:scaleX(0.940);transform-origin:0 50%;">ΔΙΠΟΛΙΚΟ ΗΛΕΚΤΡΟΔΙΟ (ΛΟΥΠΑ) TUR P 118/2 STORZ</span></span>
<span class="t" style="left:536.81px;top:525.12px;font-size:11px;line-height:14px;color:#4a4a4a;"><span class="s" style="transform:scaleX(0.929);transform-origin:0 50%;">STO003</span></span>
<span class="t" style="left:695.25px;top:525.12px;font-size:11px;line-height:14px;color:#4a4a4a;"><span class="s" style="transform:scaleX(0.929);transform-origin:0 50%;">ΔΙΠΟΛΙΚΟ ΗΛΕΚΤΡΟΔΙΟ (ΛΟΥΠΑ) TUR ΚΥΣΤΗΣ 118/5 STORZ</span></span>
<span class="t" style="left:536.81px;top:543.13px;font-size:11px;line-height:14px;color:#4a4a4a;"><span class="s" style="transform:scaleX(0.929);transform-origin:0 50%;">STO001</span></span>
<span class="t" style="left:695.25px;top:543.13px;font-size:11px;line-height:14px;color:#4a4a4a;"><span class="s" style="transform:scaleX(0.953);transform-origin:0 50%;">ΔΙΠΟΛΙΚΟ ΗΛΕΚΤΡΟΔΙΟ (ΜΠΙΛΙΑ) 80/10 STORZ</span></span>
<span class="t" style="left:538.12px;top:561.13px;font-size:11px;line-height:14px;color:#4a4a4a;"><span class="s" style="transform:scaleX(0.935);transform-origin:0 50%;">1ΕΛΙ04</span></span>
<span class="t" style="left:695.25px;top:561.13px;font-size:11px;line-height:14px;color:#4a4a4a;"><span class="s" style="transform:scaleX(0.959);transform-origin:0 50%;">ΕΓΑΓΩΓΕΑΣ ΛΙΘΩΝ NITINOL ΕΛΙΞ</span></span>
<span class="t" style="left:536.81px;top:579.12px;font-size:11px;line-height:14px;color:#4a4a4a;"><span class="s" style="transform:scaleX(0.933);transform-origin:0 50%;">ΑΡΘ004</span></span>
<span class="t" style="left:695.25px;top:579.12px;font-size:11px;line-height:14px;color:#4a4a4a;"><span class="s" style="transform:scaleX(0.921);transform-origin:0 50%;">ΕΙΔ.ΑΠΟΡΟΦ. ΒΙΔΑ GENESYS 9.0X35MM ΑΡΘΡΩΣΙΣ</span></span>
<span class="t" style="left:536.81px;top:597.12px;font-size:11px;line-height:14px;color:#4a4a4a;"><span class="s" style="transform:scaleX(0.907);transform-origin:0 50%;">AGG003</span></span>
<span class="t" style="left:695.25px;top:597.12px;font-size:11px;line-height:14px;color:#4a4a4a;"><span class="s" style="transform:scaleX(0.923);transform-origin:0 50%;">ΕΜΒΑΛΩΜΑ ΑΡΤΗΡΙΑΚΟ DACRON 0.8X0.75 AGGIOMED</span></span>
<span class="t" style="left:536.81px;top:615.12px;font-size:11px;line-height:14px;color:#4a4a4a;"><span class="s" style="transform:scaleX(0.907);transform-origin:0 50%;">MED001</span></span>
<span class="t" style="left:695.25px;top:615.12px;font-size:11px;line-height:14px;color:#4a4a4a;"><span class="s" style="transform:scaleX(0.882);transform-origin:0 50%;">ΕΝΔΟΠΡΟΘΕΣΗ KOYLE DIAPLER</span></span>
<span class="t" style="left:538.12px;top:633.13px;font-size:11px;line-height:14px;color:#4a4a4a;"><span class="s" style="transform:scaleX(0.906);transform-origin:0 50%;">1MAV01</span></span>
<span class="t" style="left:695.25px;top:633.13px;font-size:11px;line-height:14px;color:#4a4a4a;"><span class="s" style="transform:scaleX(0.902);transform-origin:0 50%;">ΕΝΔΟΦΑΚΟΣ AKREOS ADAPT ΜΑΥΡΟΓΕΝΗΣ</span></span>
<span class="t" style="left:536.81px;top:651.13px;font-size:11px;line-height:14px;color:#4a4a4a;"><span class="s" style="transform:scaleX(0.971);transform-origin:0 50%;">IOL003</span></span>
<span class="t" style="left:695.25px;top:651.13px;font-size:11px;line-height:14px;color:#4a4a4a;"><span class="s" style="transform:scaleX(0.922);transform-origin:0 50%;">ΕΝΔΟΦΑΚΟΣ ALCON MTA4UO ΠΡΟΣΘΙΟΥ IOLART</span></span>
<span class="t" style="left:536.81px;top:669.12px;font-size:11px;line-height:14px;color:#4a4a4a;"><span class="s" style="transform:scaleX(0.929);transform-origin:0 50%;">ALC001</span></span>
<span class="t" style="left:695.25px;top:669.12px;font-size:11px;line-height:14px;color:#4a4a4a;"><span class="s" style="transform:scaleX(0.923);transform-origin:0 50%;">ΕΝΔΟΦΑΚΟΣ BICON SN60AT ALCON</span></span>
<span class="t" style="left:536.81px;top:687.12px;font-size:11px;line-height:14px;color:#4a4a4a;"><span class="s" style="transform:scaleX(0.929);transform-origin:0 50%;">ALC003</span></span>
<span class="t" style="left:695.25px;top:687.12px;font-size:11px;line-height:14px;color:#4a4a4a;"><span class="s" style="transform:scaleX(0.918);transform-origin:0 50%;">ΕΝΔΟΦΑΚΟΣ BICON SN60WF ALCON</span></span>
<span class="t" style="left:538.12px;top:705.12px;font-size:11px;line-height:14px;color:#4a4a4a;"><span class="s" style="transform:scaleX(0.889);transform-origin:0 50%;">1AMV01</span></span>
<span class="t" style="left:695.25px;top:705.12px;font-size:11px;line-height:14px;color:#4a4a4a;"><span class="s" style="transform:scaleX(0.915);transform-origin:0 50%;">ΕΝΔΟΦΑΚΟΣ BI-FLEX 677AB AMVIS</span></span>
<span class="t" style="left:536.81px;top:723.13px;font-size:11px;line-height:14px;color:#4a4a4a;"><span class="s" style="transform:scaleX(0.971);transform-origin:0 50%;">IOL001</span></span>
<span class="t" style="left:695.25px;top:723.13px;font-size:11px;line-height:14px;color:#4a4a4a;"><span class="s" style="transform:scaleX(0.910);transform-origin:0 50%;">ΕΝΔΟΦΑΚΟΣ CLARE IOLART</span></span>
<span class="t" style="left:538.12px;top:741.12px;font-size:11px;line-height:14px;color:#4a4a4a;"><span class="s" style="transform:scaleX(0.906);transform-origin:0 50%;">1MAV02</span></span>
<span class="t" style="left:695.25px;top:741.12px;font-size:11px;line-height:14px;color:#4a4a4a;"><span class="s" style="transform:scaleX(0.910);transform-origin:0 50%;">ΕΝΔΟΦΑΚΟΣ ENVISTA MX60 ΜΑΥΡΟΓΕΝΗΣ</span></span>
<span class="t" style="left:538.12px;top:759.12px;font-size:11px;line-height:14px;color:#4a4a4a;"><span class="s" style="transform:scaleX(0.886);transform-origin:0 50%;">1KAL02</span></span>
<span class="t" style="left:695.25px;top:759.12px;font-size:11px;line-height:14px;color:#4a4a4a;"><span class="s" style="transform:scaleX(0.901);transform-origin:0 50%;">ΕΝΔΟΦΑΚΟΣ FREEDOM KALTEQ</span></span>
<span class="t" style="left:536.25px;top:777.12px;font-size:11px;line-height:14px;color:#4a4a4a;"><span class="s" style="transform:scaleX(0.958);transform-origin:0 50%;">KAL003</span></span>
<span class="t" style="left:695.25px;top:777.12px;font-size:11px;line-height:14px;color:#4a4a4a;"><span class="s" style="transform:scaleX(0.904);transform-origin:0 50%;">ΕΝΔΟΦΑΚΟΣ FREEDOM ΠΡΟΣΘΙΟΥ KALTEQ</span></span>
<span class="t" style="left:536.25px;top:795.12px;font-size:11px;line-height:14px;color:#4a4a4a;"><span class="s" style="transform:scaleX(0.980);transform-origin:0 50%;">UNI001</span></span>
<span class="t" style="left:695.25px;top:795.12px;font-size:11px;line-height:14px;color:#4a4a4a;"><span class="s" style="transform:scaleX(0.919);transform-origin:0 50%;">ΕΝΔΟΦΑΚΟΣ HANITA B LENS UNION</span></span>
<span class="t" style="left:538.12px;top:813.13px;font-size:11px;line-height:14px;color:#4a4a4a;"><span class="s" style="transform:scaleX(0.915);transform-origin:0 50%;">ΓΧ001</span></span>
<span class="t" style="left:695.25px;top:813.13px;font-size:11px;line-height:14px;color:#4a4a4a;"><span class="s" style="transform:scaleX(0.925);transform-origin:0 50%;">ΕΝΔΟΦΑΚΟΣ HANITA ΓΕΝ.ΧΕΙΡΟΥΡΓΙΚΗ</span></span>
<span class="t" style="left:536.81px;top:831.12px;font-size:11px;line-height:14px;color:#4a4a4a;"><span class="s" style="transform:scaleX(0.971);transform-origin:0 50%;">IOL001</span></span>
<span class="t" style="left:695.25px;top:831.12px;font-size:11px;line-height:14px;color:#4a4a4a;"><span class="s" style="transform:scaleX(0.926);transform-origin:0 50%;">ΕΝΔΟΦΑΚΟΣ HEXAVISION HQ-201 IOLART</span></span>
<span class="t" style="left:804.38px;top:434.66px;width:600px;text-align:right;font-size:11px;line-height:14px;color:#4a4a4a;"><span class="s" style="">1</span></span>
<svg class="i" style="left:521.81px;top:436.41px;" width="10.5" height="10.5" viewBox="0 0 9 9"><path d="M0.6 8.4 L1.3 5.6 L6.3 0.6 L8.4 2.7 L3.4 7.7 Z" fill="#2a74d8"/></svg>
<div style="left:1177.12px;top:858.38px;width:114.75px;height:35.06px;border:2.2px solid #de2236;"></div>
<div style="left:1180.12px;top:861px;width:109.5px;height:29.25px;background:#ededed;border:3px solid #9a9a9a;border-right-color:#6e6e6e;border-bottom-color:#6e6e6e;"></div>
<span class="t" style="left:934.88px;top:869px;width:600px;text-align:center;font-size:11px;line-height:14px;color:#222;"><span class="s" style="transform:scaleX(0.943);transform-origin:50% 50%;">Επικύρωση</span></span>
<div style="left:1296.75px;top:861.19px;width:109.88px;height:29.25px;background:#f0f0f0;border:1.6px solid #484848;border-top-color:#a6a6a6;border-left-color:#a6a6a6;"></div>
<span class="t" style="left:1050.56px;top:869px;width:600px;text-align:center;font-size:11px;line-height:14px;color:#222;"><span class="s" style="transform:scaleX(0.986);transform-origin:50% 50%;">Ακύρωση</span></span>
<div class="badge" style="left:1280.94px;top:843.12px;">4</div>
</div>
</body>
</html>
